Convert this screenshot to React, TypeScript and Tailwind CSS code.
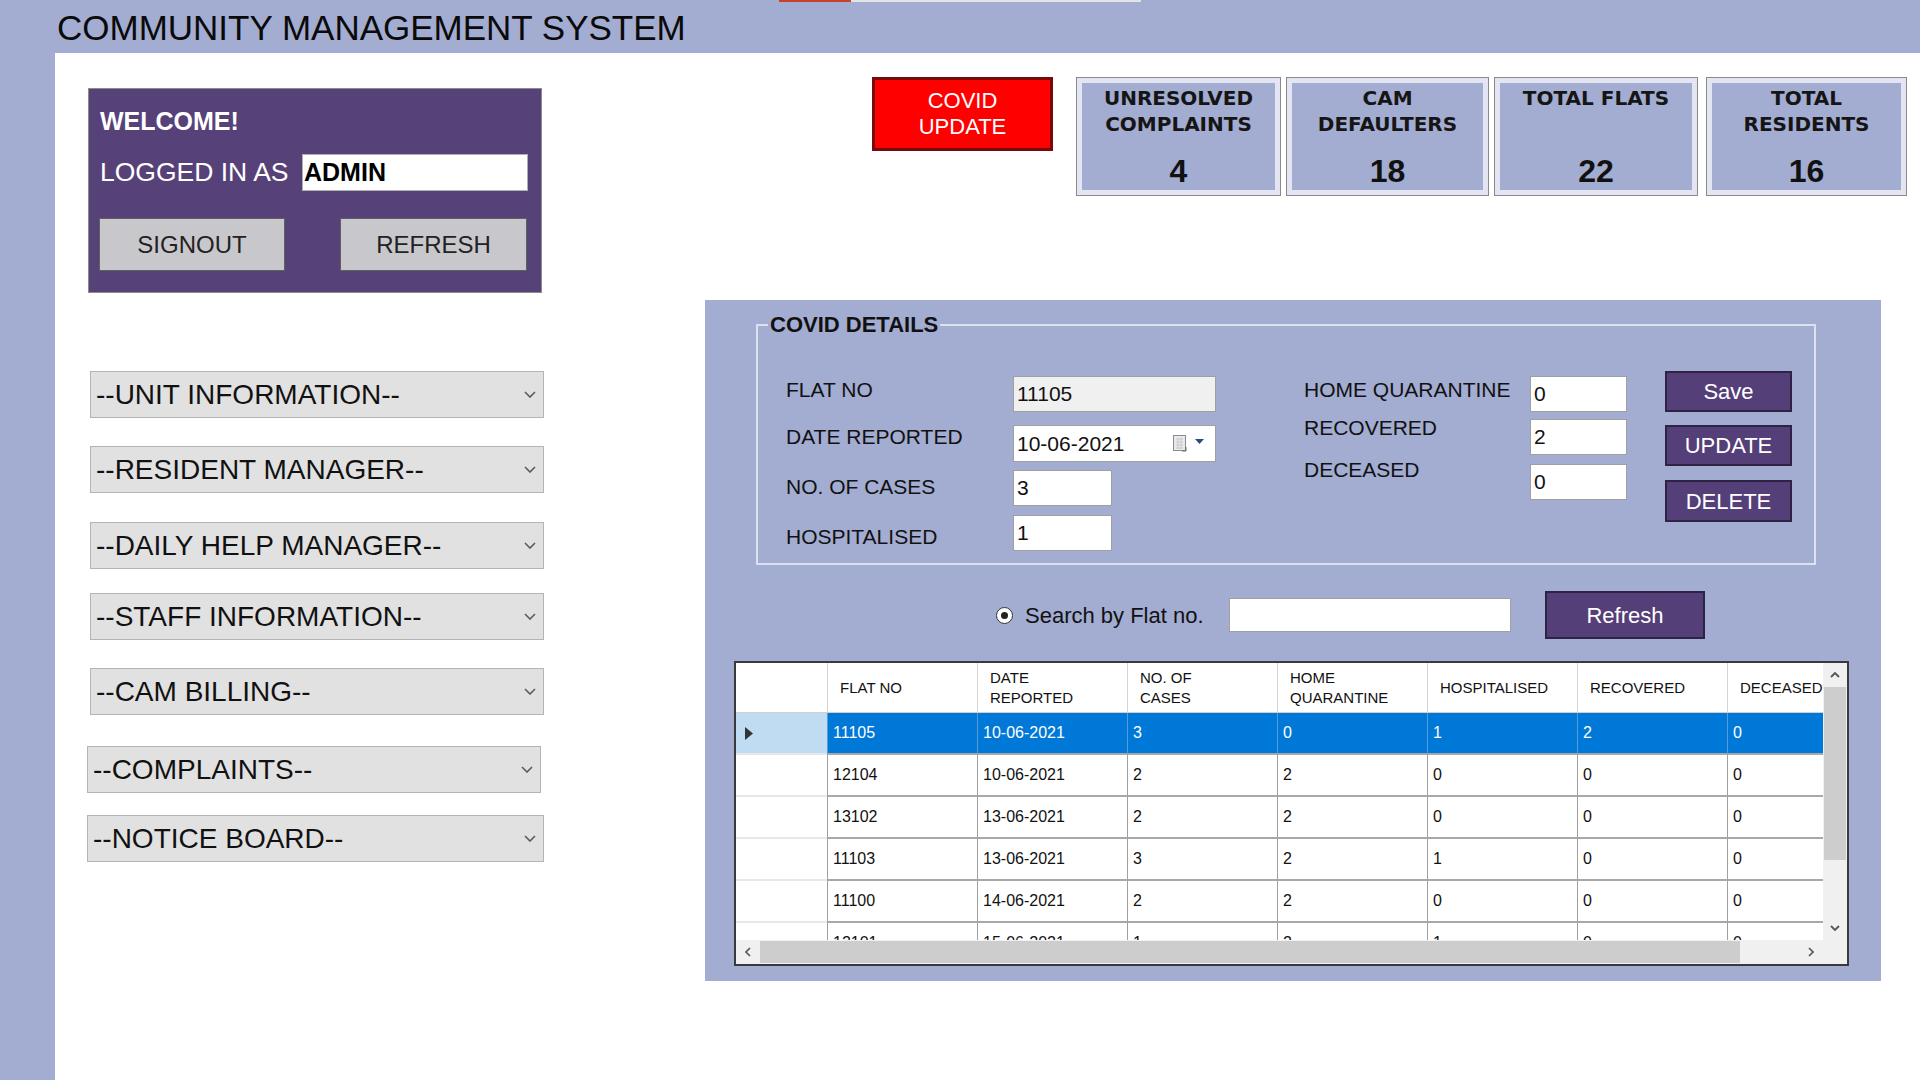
import React from "react";

const Chevron = () => (
  <svg width="12" height="7" viewBox="0 0 12 7" className="shrink-0">
    <path d="M1 1 L6 6 L11 1" stroke="#5a5a5a" strokeWidth="1.6" fill="none" />
  </svg>
);

const Dropdown = ({ label, className }: { label: string; className: string }) => (
  <div
    className={
      "h-[47px] bg-[#e1e1e1] border border-[#b4b4b4] flex items-center justify-between pl-[5px] pr-[7px] " +
      className
    }
  >
    <span className="text-[28px] leading-none text-[#111] whitespace-nowrap">{label}</span>
    <Chevron />
  </div>
);

const StatCard = ({ title, value, w }: { title: string[]; value: string; w: string }) => (
  <div className={"h-[119px] border border-[#8a8a8a] bg-[#e3e5f3] p-[5px] flex " + w}>
    <div className="flex-1 bg-[#a3acd1] flex flex-col items-center">
      <div className="h-[54px] pt-[2px] flex flex-col items-center font-['DejaVu_Sans',sans-serif] font-bold text-[20px] leading-[26px] text-[#151515]">
        {title.map((t) => (
          <span key={t} className="whitespace-nowrap">
            {t}
          </span>
        ))}
      </div>
      <div className="mt-[16px] text-[32px] font-bold leading-[36px] text-[#111]">{value}</div>
    </div>
  </div>
);

const Field = ({ w, bg, children }: { w: string; bg?: string; children?: React.ReactNode }) => (
  <div
    className={
      "h-full border border-[#a0a0a0] flex items-center pl-[3px] text-[21px] text-[#111] " +
      w +
      " " +
      (bg ?? "bg-white")
    }
  >
    {children}
  </div>
);

const PurpleBtn = ({ children, className }: { children: React.ReactNode; className: string }) => (
  <div
    className={
      "bg-[#553f78] border-2 border-[#2f2345] text-white text-[22px] flex items-center justify-center " + className
    }
  >
    {children}
  </div>
);

const rows = [
  ["11105", "10-06-2021", "3", "0", "1", "2", "0"],
  ["12104", "10-06-2021", "2", "2", "0", "0", "0"],
  ["13102", "13-06-2021", "2", "2", "0", "0", "0"],
  ["11103", "13-06-2021", "3", "2", "1", "0", "0"],
  ["11100", "14-06-2021", "2", "2", "0", "0", "0"],
  ["12101", "15-06-2021", "1", "2", "1", "0", "0"],
];

const headers: string[][] = [
  ["FLAT NO"],
  ["DATE", "REPORTED"],
  ["NO. OF", "CASES"],
  ["HOME", "QUARANTINE"],
  ["HOSPITALISED"],
  ["RECOVERED"],
  ["DECEASED"],
];

export default function App() {
  return (
    <div className="w-[1920px] h-[1080px] flex flex-col bg-white overflow-hidden font-['Liberation_Sans',Arial,sans-serif] text-[#111]">
      <header className="h-[53px] bg-[#a3acd1] flex flex-col shrink-0">
        <div className="h-[2px] flex pl-[779px]">
          <div className="w-[72px] bg-[#c4432a]" />
          <div className="w-[290px] bg-[#e4e4e4]" />
        </div>
        <div className="flex-1 flex items-center pl-[57px]">
          <span className="text-[35px] leading-none text-[#0a0a0a] whitespace-nowrap">COMMUNITY MANAGEMENT SYSTEM</span>
        </div>
      </header>

      <div className="flex-1 flex">
        <div className="w-[55px] bg-[#a3acd1] shrink-0" />
        <main className="flex-1 flex">
          {/* left column */}
          <div className="w-[650px] shrink-0 pl-[33px] pt-[35px] flex flex-col items-start">
            <div className="w-[454px] h-[205px] bg-[#574179] border border-[#8c8c8c] flex flex-col pl-[10px]">
              <div className="h-[63px] flex items-center pl-[1px] pt-[2px]">
                <span className="text-[25px] font-bold text-white leading-none">WELCOME!</span>
              </div>
              <div className="mt-[2px] h-[37px] flex items-center">
                <span className="w-[203px] pl-[1px] text-[26.5px] text-white leading-none whitespace-nowrap">LOGGED IN AS</span>
                <div className="w-[226px] h-full bg-white border border-[#b0b0b0] flex items-center pl-[1px] text-[25px] font-bold text-black">
                  ADMIN
                </div>
              </div>
              <div className="mt-[27px] flex">
                <div className="w-[186px] h-[53px] bg-[#c8c8cc] border border-[#606060] flex items-center justify-center text-[24px] text-[#222]">
                  SIGNOUT
                </div>
                <div className="ml-[55px] w-[187px] h-[53px] bg-[#c8c8cc] border border-[#606060] flex items-center justify-center text-[24px] text-[#222]">
                  REFRESH
                </div>
              </div>
            </div>

            <Dropdown label="--UNIT INFORMATION--" className="mt-[78px] ml-[2px] w-[454px]" />
            <Dropdown label="--RESIDENT MANAGER--" className="mt-[28px] ml-[2px] w-[454px]" />
            <Dropdown label="--DAILY HELP MANAGER--" className="mt-[29px] ml-[2px] w-[454px]" />
            <Dropdown label="--STAFF INFORMATION--" className="mt-[24px] ml-[2px] w-[454px]" />
            <Dropdown label="--CAM BILLING--" className="mt-[28px] ml-[2px] w-[454px]" />
            <Dropdown label="--COMPLAINTS--" className="mt-[31px] ml-[-1px] w-[454px]" />
            <Dropdown label="--NOTICE BOARD--" className="mt-[22px] ml-[-1px] w-[457px]" />
          </div>

          {/* right column */}
          <div className="flex-1 flex flex-col">
            <div className="pt-[24px] pl-[167px] flex items-start">
              <div className="w-[181px] h-[74px] bg-[#ff0000] border-[3px] border-[#7a0909] flex flex-col items-center justify-center text-white text-[22px] leading-[26px]">
                <span>COVID</span>
                <span>UPDATE</span>
              </div>
              <div className="ml-[23px] flex">
                <StatCard title={["UNRESOLVED", "COMPLAINTS"]} value="4" w="w-[205px]" />
                <div className="w-[5px]" />
                <StatCard title={["CAM", "DEFAULTERS"]} value="18" w="w-[203px]" />
                <div className="w-[5px]" />
                <StatCard title={["TOTAL FLATS"]} value="22" w="w-[204px]" />
                <div className="w-[8px]" />
                <StatCard title={["TOTAL", "RESIDENTS"]} value="16" w="w-[201px]" />
              </div>
            </div>

            {/* covid panel */}
            <div className="mt-[104px] w-[1176px] h-[681px] bg-[#a3acd1] flex flex-col pt-[24px]">
              <div className="ml-[51px] w-[1060px] h-[241px] border-2 border-[#dde1ef] flex flex-col">
                <div className="-mt-[14px] ml-[10px] px-[2px] w-fit bg-[#a3acd1] text-[22px] font-bold leading-[26px] text-[#111]">
                  COVID DETAILS
                </div>
                <div className="flex pl-[28px]">
                  {/* col 1 */}
                  <div className="flex flex-col">
                    <div className="mt-[38px] h-[36px] flex items-center">
                      <span className="w-[227px] pb-[8px] text-[21px]">FLAT NO</span>
                      <Field w="w-[203px]" bg="bg-[#f0f0f0]">11105</Field>
                    </div>
                    <div className="mt-[13px] h-[37px] flex items-center">
                      <span className="w-[227px] pb-[13px] text-[21px]">DATE REPORTED</span>
                      <div className="w-[203px] h-full bg-white border border-[#a0a0a0] flex items-center pl-[3px] pr-[11px] text-[21px]">
                        <span className="flex-1">10-06-2021</span>
                        <svg width="14" height="17" viewBox="0 0 14 17">
                          <rect x="0.5" y="0.5" width="12" height="15" fill="#e9e9ec" stroke="#8a8a8f" />
                          <path d="M3 4h7M3 7h7M3 10h7M3 13h7M5 3v11M8 3v11" stroke="#c4c4ca" strokeWidth="0.8" />
                          <path d="M9 16h4v-4" fill="none" stroke="#6a6a6f" />
                        </svg>
                        <svg width="9" height="5" viewBox="0 0 9 5" className="ml-[8px] mb-[4px]">
                          <path d="M0 0h9L4.5 5z" fill="#2d4a7c" />
                        </svg>
                      </div>
                    </div>
                    <div className="mt-[8px] h-[36px] flex items-center">
                      <span className="w-[227px] pb-[2px] text-[21px]">NO. OF CASES</span>
                      <Field w="w-[99px]">3</Field>
                    </div>
                    <div className="mt-[9px] h-[36px] flex items-center">
                      <span className="w-[227px] pt-[8px] text-[21px]">HOSPITALISED</span>
                      <Field w="w-[99px]">1</Field>
                    </div>
                  </div>
                  {/* col 2 */}
                  <div className="ml-[88px] flex flex-col">
                    <div className="mt-[38px] h-[36px] flex items-center">
                      <span className="w-[226px] pb-[8px] text-[21px] whitespace-nowrap">HOME QUARANTINE</span>
                      <Field w="w-[97px]">0</Field>
                    </div>
                    <div className="mt-[7px] h-[36px] flex items-center">
                      <span className="w-[226px] pb-[18px] text-[21px]">RECOVERED</span>
                      <Field w="w-[97px]">2</Field>
                    </div>
                    <div className="mt-[9px] h-[36px] flex items-center">
                      <span className="w-[226px] pb-[24px] text-[21px]">DECEASED</span>
                      <Field w="w-[97px]">0</Field>
                    </div>
                  </div>
                  {/* col 3 */}
                  <div className="ml-[38px] flex flex-col">
                    <PurpleBtn className="mt-[33px] w-[127px] h-[41px]">Save</PurpleBtn>
                    <PurpleBtn className="mt-[13px] w-[127px] h-[41px]">UPDATE</PurpleBtn>
                    <PurpleBtn className="mt-[14px] w-[127px] h-[42px]">DELETE</PurpleBtn>
                  </div>
                </div>
              </div>

              {/* search row */}
              <div className="mt-[26px] h-[48px] flex items-center pl-[291px]">
                <div className="w-[17px] h-[17px] rounded-full border border-[#333] bg-white flex items-center justify-center">
                  <div className="w-[7px] h-[7px] rounded-full bg-[#222]" />
                </div>
                <span className="ml-[12px] w-[204px] text-[22px] text-[#111]">Search by Flat no.</span>
                <div className="w-[282px] h-[34px] bg-white border border-[#a0a0a0]" />
                <PurpleBtn className="ml-[34px] w-[160px] h-[48px]">Refresh</PurpleBtn>
              </div>

              {/* table */}
              <div className="mt-[22px] ml-[29px] w-[1115px] h-[305px] border-2 border-[#3a3a3a] bg-white flex flex-col">
                <div className="h-[277px] flex">
                  <div className="w-[1087px] h-full overflow-hidden">
                    <div className="w-[1141px] flex flex-col">
                      {/* header */}
                      <div className="h-[50px] flex border-b border-[#d0d0d0]">
                        <div className="w-[91px] shrink-0" />
                        {headers.map((h, i) => (
                          <div
                            key={i}
                            className="w-[150px] shrink-0 border-l border-[#d4d4d4] flex flex-col justify-center pl-[12px] text-[15px] leading-[20px] text-[#111] whitespace-nowrap"
                          >
                            {h.map((t) => (
                              <span key={t}>{t}</span>
                            ))}
                          </div>
                        ))}
                      </div>
                      {rows.map((r, ri) => {
                        const sel = ri === 0;
                        return (
                          <div key={ri} className="h-[42px] flex shrink-0">
                            <div
                              className={
                                "w-[91px] shrink-0 flex items-center pl-[9px] border-b-2 " +
                                (sel ? "bg-[#bfdcf2] border-[#e8e8e8]" : "bg-white border-[#e8e8e8]")
                              }
                            >
                              {sel && (
                                <svg width="8" height="13" viewBox="0 0 8 13">
                                  <path d="M0 0 L8 6.5 L0 13z" fill="#333" />
                                </svg>
                              )}
                            </div>
                            {r.map((c, ci) => (
                              <div
                                key={ci}
                                className={
                                  "w-[150px] shrink-0 border-l border-b-2 flex items-center pl-[5px] text-[16px] " +
                                  (sel
                                    ? "bg-[#0078d7] text-white border-l-[#5a9ad6] border-b-[#a8a8a8]"
                                    : "bg-white text-[#111] border-l-[#a0a0a0] border-b-[#a8a8a8]")
                                }
                              >
                                {c}
                              </div>
                            ))}
                          </div>
                        );
                      })}
                    </div>
                  </div>
                  {/* vertical scrollbar */}
                  <div className="w-[24px] h-full bg-[#f0f0f0] flex flex-col">
                    <div className="h-[24px] flex items-center justify-center">
                      <svg width="10" height="6" viewBox="0 0 10 6">
                        <path d="M1 5 L5 1 L9 5" stroke="#555" strokeWidth="1.8" fill="none" />
                      </svg>
                    </div>
                    <div className="h-[173px] mx-[1px] bg-[#cdcdcd]" />
                    <div className="flex-1" />
                    <div className="h-[24px] flex items-center justify-center">
                      <svg width="10" height="6" viewBox="0 0 10 6">
                        <path d="M1 1 L5 5 L9 1" stroke="#555" strokeWidth="1.8" fill="none" />
                      </svg>
                    </div>
                  </div>
                </div>
                {/* horizontal scrollbar */}
                <div className="flex-1 flex bg-[#f0f0f0]">
                  <div className="w-[24px] flex items-center justify-center">
                    <svg width="6" height="10" viewBox="0 0 6 10">
                      <path d="M5 1 L1 5 L5 9" stroke="#555" strokeWidth="1.6" fill="none" />
                    </svg>
                  </div>
                  <div className="w-[980px] my-[1px] bg-[#cdcdcd]" />
                  <div className="flex-1" />
                  <div className="w-[24px] flex items-center justify-center">
                    <svg width="6" height="10" viewBox="0 0 6 10">
                      <path d="M1 1 L5 5 L1 9" stroke="#555" strokeWidth="1.6" fill="none" />
                    </svg>
                  </div>
                  <div className="w-[24px]" />
                </div>
              </div>
            </div>
          </div>
        </main>
      </div>
    </div>
  );
}
